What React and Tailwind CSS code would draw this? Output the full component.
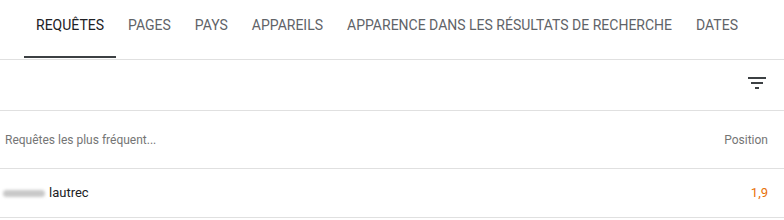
import React from 'react';

const TABS = ['Requêtes', 'Pages', 'Pays', 'Appareils', 'Apparence dans les résultats de recherche', 'Dates'];

export default function App() {
  return (
    <div className="w-[784px] h-[220px] bg-white overflow-hidden" style={{ fontFamily: 'Roboto, "Liberation Sans", sans-serif' }}>
      <div className="flex h-[60px] pl-6 border-b border-[#e0e0e0]">
        {TABS.map((t, i) => (
          <div
            key={t}
            className={`relative flex items-center px-3 pb-[8px] text-[14px] uppercase ${i === 0 ? 'text-[#202124]' : 'text-[#5f6368]'}`}
          >
            {t}
            {i === 0 && <span className="absolute left-0 right-0 bottom-[1px] h-[2px] bg-[#3c4043]" />}
          </div>
        ))}
      </div>
      <div className="flex h-[51px] items-center justify-end pr-[15px] border-b border-[#e0e0e0]">
        <svg width="24" height="24" viewBox="0 0 24 24" className="mt-[-4px]">
          <path d="M10 18h4v-2h-4v2zM3 6v2h18V6H3zm3 7h12v-2H6v2z" fill="#3c4043" />
        </svg>
      </div>
      <div className="flex h-[58px] items-center justify-between pl-[5px] pr-[16px] border-b border-[#e0e0e0] text-[12px] text-[#757575]">
        <span>Requêtes les plus fréquent...</span>
        <span>Position</span>
      </div>
      <div className="flex h-[49px] items-center justify-between pl-[3px] pr-[16px] border-b border-[#e0e0e0] text-[13px]">
        <span className="flex items-center gap-[4px] text-[#202124]">
          <span className="inline-block w-[42px] h-[7px] rounded-full bg-[#c8c8c8] blur-[1.5px]" />
          lautrec
        </span>
        <span className="text-[#e8710a]">1,9</span>
      </div>
    </div>
  );
}
